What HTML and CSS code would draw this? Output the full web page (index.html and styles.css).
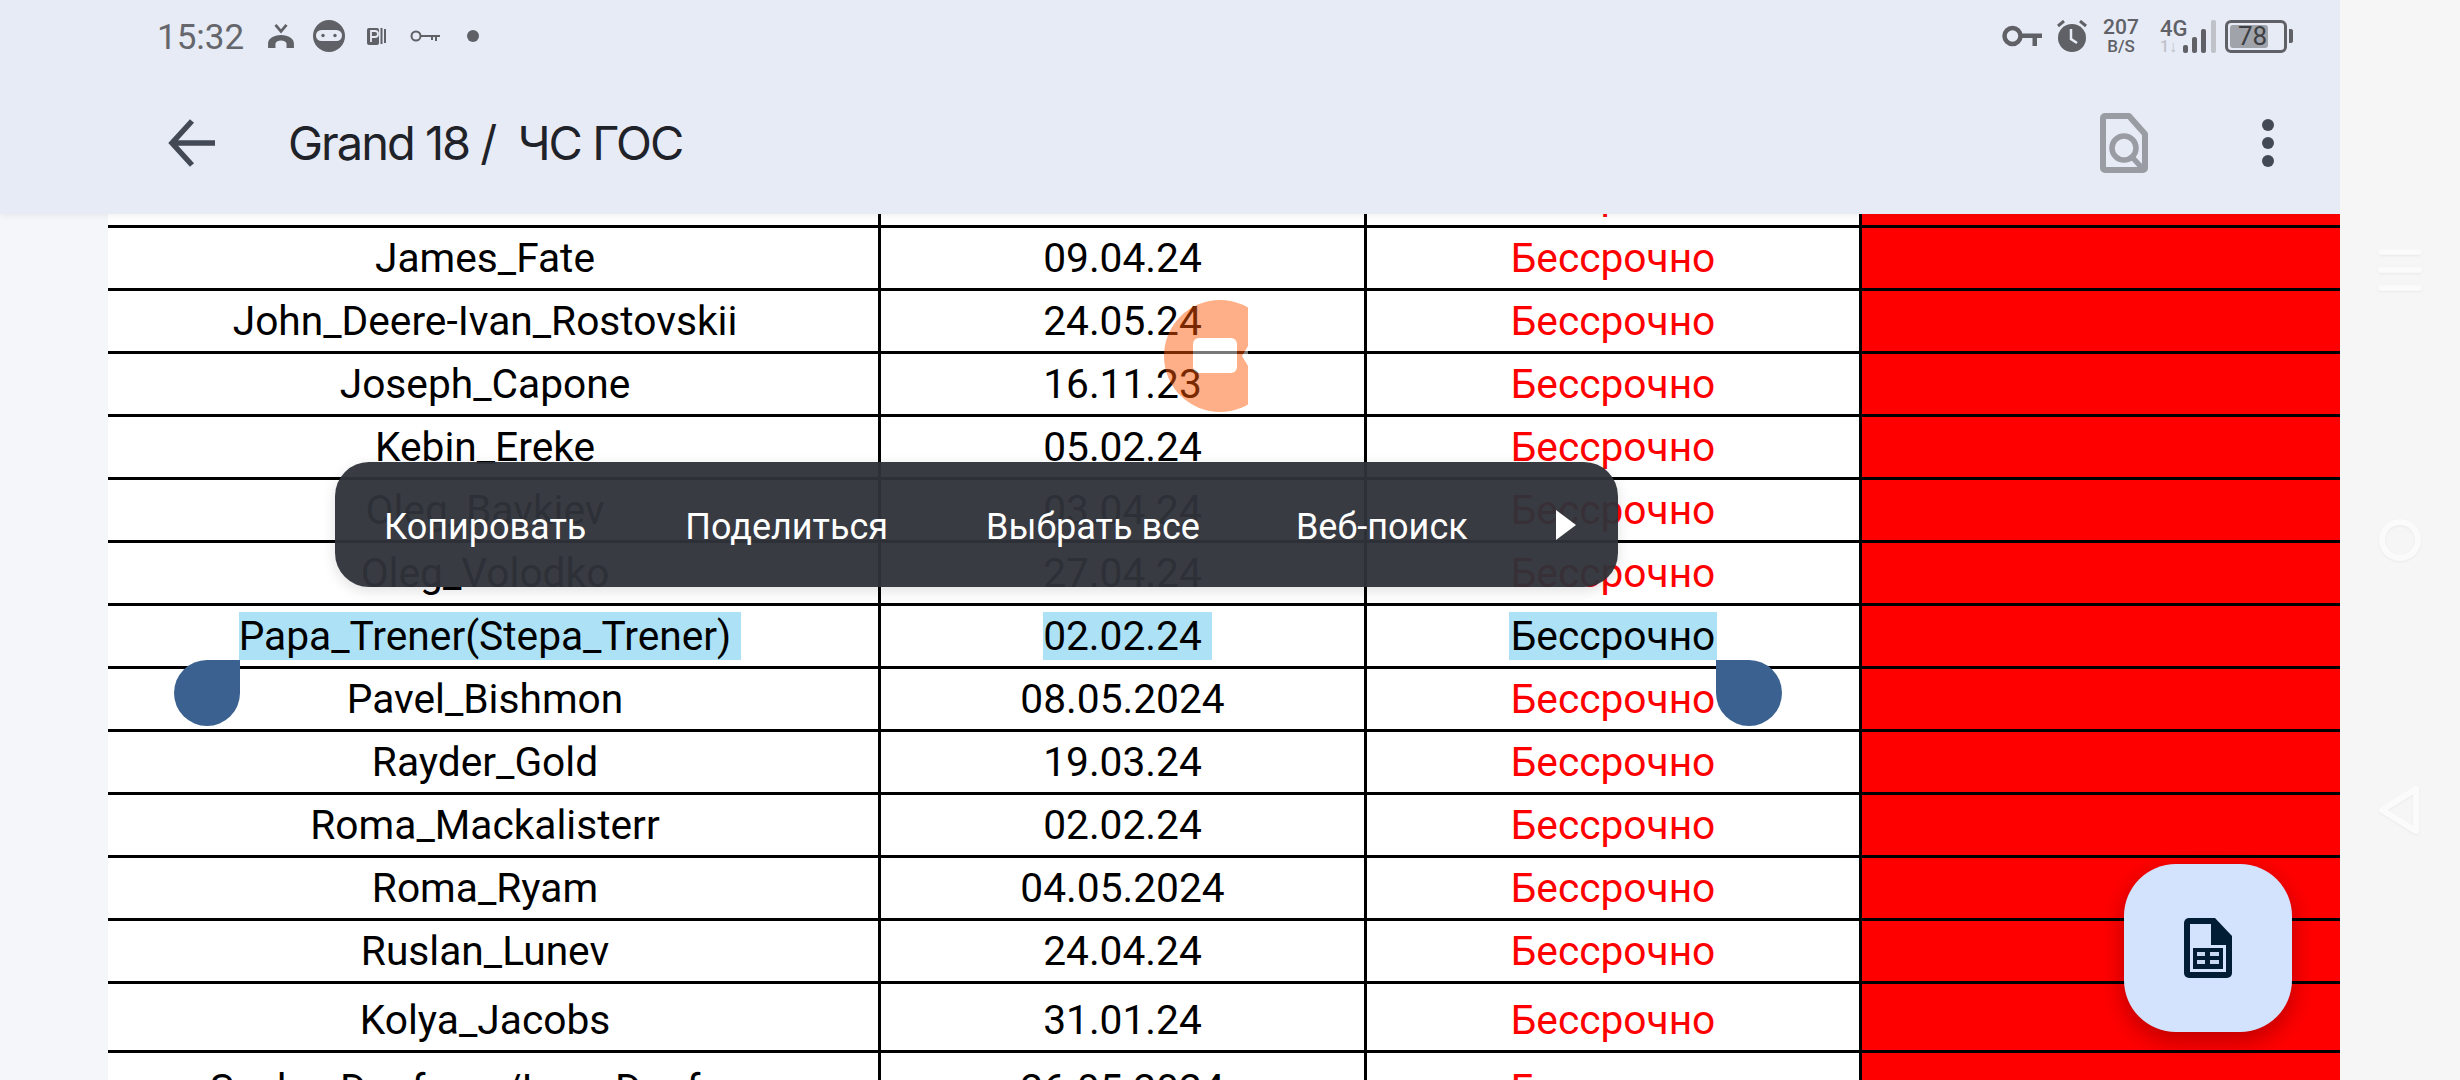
FILE: index.html
```html
<!DOCTYPE html>
<html lang="ru">
<head>
<meta charset="utf-8">
<title>Grand 18 / ЧС ГОС</title>
<link rel="stylesheet" href="styles.css">
</head>
<body>
<div class="screen">
  <div class="app">
    <header class="appbar">
      <div class="status">
        <div class="status-left">
          <span class="time">15:32</span>
          <svg class="i-call" viewBox="0 0 30 26"><path d="M9 1l6 7 6-7" fill="none" stroke="#5f6166" stroke-width="3"/><path d="M1 26v-5c0-5 6-9 14-9s14 4 14 9v5h-8v-5c-1-2-3-3-6-3s-5 1-6 3v5z" fill="#5f6166"/></svg>
          <svg class="i-ninja" viewBox="0 0 32 32"><circle cx="16" cy="16" r="16" fill="#5f6166"/><rect x="3" y="10" width="26" height="11" rx="5.5" fill="#e7ebf5"/><circle cx="10" cy="15.500" r="1.700" fill="#5f6166"/><circle cx="22" cy="15.500" r="1.700" fill="#5f6166"/></svg>
          <svg class="i-p" viewBox="0 0 20 20"><rect x="0" y="2" width="12" height="17" rx="2" fill="#5f6166"/><path d="M4 16V5h4a2.500 2.500 0 0 1 0 6H4" fill="none" stroke="#e7ebf5" stroke-width="1.800"/><path d="M14.500 2v16M18 3v14" stroke="#5f6166" stroke-width="2"/></svg>
          <svg class="i-key-small" viewBox="0 0 30 14"><circle cx="6" cy="7" r="4.500" fill="none" stroke="#5f6166" stroke-width="2"/><path d="M10 6h20v2h-3v4h-2V8h-2v3h-2V8H10z" fill="#5f6166"/></svg>
          <span class="dot"></span>
        </div>
        <div class="status-right">
          <svg class="i-key" viewBox="0 0 40 22"><circle cx="10.500" cy="11" r="8" fill="none" stroke="#5f6166" stroke-width="4.500"/><path d="M18 8.500h22v4.500h-5v8h-4.500v-8H18z" fill="#5f6166"/></svg>
          <svg class="i-clock" viewBox="0 0 32 33"><circle cx="16" cy="18" r="14" fill="#5f6166"/><path d="M15 9v10l6 4" fill="none" stroke="#e7ebf5" stroke-width="2.500"/><path d="M2 6l6-5M30 6l-6-5" stroke="#5f6166" stroke-width="3"/></svg>
          <div class="speed"><span class="speed-num">207</span><span class="speed-unit">B/S</span></div>
          <div class="net"><span class="net-label">4G</span><span class="net-arrows">1↓</span></div>
          <svg class="i-signal" viewBox="0 0 33 33"><rect x="0" y="25" width="5" height="8" rx="2" fill="#5f6166"/><rect x="9" y="17" width="5" height="16" rx="2" fill="#5f6166"/><rect x="18" y="9" width="5" height="24" rx="2" fill="#5f6166"/><rect x="28" y="0" width="5" height="33" rx="2" fill="#bfc2c9"/></svg>
          <div class="battery"><div class="battery-fill"></div><span class="battery-num">78</span></div>
          <span class="battery-nub"></span>
        </div>
      </div>
      <div class="toolbar">
        <svg class="i-back" viewBox="0 0 48 48"><path d="M47 24H4M24 2L4 24l20 22" fill="none" stroke="#444a55" stroke-width="5.500"/></svg>
        <h1 class="title">Grand 18 /&nbsp; ЧС ГОС</h1>
        <svg class="i-docsearch" viewBox="0 0 48 60"><path d="M5 3h24l16 18v34a2 2 0 0 1-2 2H5a2 2 0 0 1-2-2V5a2 2 0 0 1 2-2z" fill="none" stroke="#999ca3" stroke-width="6" stroke-linejoin="round"/><circle cx="24" cy="35" r="12" fill="none" stroke="#999ca3" stroke-width="5.500"/><path d="M32 44l11 12" stroke="#999ca3" stroke-width="5.500"/></svg>
        <div class="more"><span></span><span></span><span></span></div>
      </div>
    </header>
    <main class="sheet">
      <div class="rows">
        <div class="row"><div class="cell"></div><div class="cell"></div><div class="cell red">Бессрочно</div><div class="cell fill"></div></div>
        <div class="row"><div class="cell name">James_Fate</div><div class="cell">09.04.24</div><div class="cell red">Бессрочно</div><div class="cell fill"></div></div>
        <div class="row"><div class="cell name">John_Deere-Ivan_Rostovskii</div><div class="cell">24.05.24</div><div class="cell red">Бессрочно</div><div class="cell fill"></div></div>
        <div class="row"><div class="cell name">Joseph_Capone</div><div class="cell">16.11.23</div><div class="cell red">Бессрочно</div><div class="cell fill"></div></div>
        <div class="row"><div class="cell name">Kebin_Ereke</div><div class="cell">05.02.24</div><div class="cell red">Бессрочно</div><div class="cell fill"></div></div>
        <div class="row"><div class="cell name">Oleg_Bavkiev</div><div class="cell">03.04.24</div><div class="cell red">Бессрочно</div><div class="cell fill"></div></div>
        <div class="row"><div class="cell name">Oleg_Volodko</div><div class="cell">27.04.24</div><div class="cell red">Бессрочно</div><div class="cell fill"></div></div>
        <div class="row"><div class="cell name"><span class="sel sel-trail">Papa_Trener(Stepa_Trener)&nbsp;</span></div><div class="cell"><span class="sel sel-trail">02.02.24&nbsp;</span></div><div class="cell"><span class="sel">Бессрочно</span></div><div class="cell fill"></div></div>
        <div class="row"><div class="cell name">Pavel_Bishmon</div><div class="cell">08.05.2024</div><div class="cell red">Бессрочно</div><div class="cell fill"></div></div>
        <div class="row"><div class="cell name">Rayder_Gold</div><div class="cell">19.03.24</div><div class="cell red">Бессрочно</div><div class="cell fill"></div></div>
        <div class="row"><div class="cell name">Roma_Mackalisterr</div><div class="cell">02.02.24</div><div class="cell red">Бессрочно</div><div class="cell fill"></div></div>
        <div class="row"><div class="cell name">Roma_Ryam</div><div class="cell">04.05.2024</div><div class="cell red">Бессрочно</div><div class="cell fill"></div></div>
        <div class="row"><div class="cell name">Ruslan_Lunev</div><div class="cell">24.04.24</div><div class="cell red">Бессрочно</div><div class="cell fill"></div></div>
        <div class="row row-tall"><div class="cell name">Kolya_Jacobs</div><div class="cell">31.01.24</div><div class="cell red">Бессрочно</div><div class="cell fill"></div></div>
        <div class="row row-tall"><div class="cell name">Sasha_Danforov/Ivan_Danforp</div><div class="cell">26.05.2024</div><div class="cell red">Бессрочно</div><div class="cell fill"></div></div>
      </div>
      <div class="handle handle-start"></div>
      <div class="handle handle-end"></div>
    </main>
    <button class="fab" type="button" aria-label="Sheet">
      <svg viewBox="0 0 48 60"><path d="M5 0h26l17 18v37a5 5 0 0 1-5 5H5a5 5 0 0 1-5-5V5a5 5 0 0 1 5-5z" fill="#001d35"/><path d="M6 6h21v21h15v27H6z" fill="#d3e3fd"/><rect x="9" y="30" width="30" height="21" fill="#001d35"/><path d="M13 34h8v4h-8zM26 34h9v4h-9zM13 42h8v4h-8zM26 42h9v4h-9z" fill="#c8d8f0"/></svg>
    </button>
    <div class="bubble"><span class="bubble-disc"></span><span class="bubble-cam"></span><span class="bubble-lens"></span></div>
    <div class="popup">
      <span class="popup-item pi-1">Копировать</span>
      <span class="popup-item pi-2">Поделиться</span>
      <span class="popup-item pi-3">Выбрать все</span>
      <span class="popup-item pi-4">Веб-поиск</span>
      <svg class="popup-arrow" viewBox="0 0 22 32"><path d="M1 1l20 15L1 31z" fill="#fff"/></svg>
    </div>
  </div>
  <nav class="navbar">
    <svg class="i-nav i-menu" viewBox="0 0 44 44"><path d="M3 4h38M3 22h38M3 40h38" stroke="#fbfbfb" stroke-width="5.500" stroke-linecap="round"/></svg>
    <svg class="i-nav i-home" viewBox="0 0 44 44"><circle cx="22" cy="22" r="18" fill="none" stroke="#fbfbfb" stroke-width="6"/></svg>
    <svg class="i-nav i-tri" viewBox="0 0 44 50"><path d="M38 4v42L4 25z" fill="none" stroke="#fbfbfb" stroke-width="6" stroke-linejoin="round"/></svg>
  </nav>
</div>
</body>
</html>
```
FILE: styles.css
```css
* { box-sizing: border-box; }
html, body { margin: 0; padding: 0; }
body {
  width: 2460px;
  height: 1080px;
  overflow: hidden;
  background: #f6f6f6;
  font-family: Roboto, "Noto Sans", sans-serif;
}
.screen { display: flex; width: 2460px; height: 1080px; }
.app {
  position: relative;
  width: 2340px;
  height: 1080px;
  overflow: hidden;
  display: flex;
  flex-direction: column;
  background: #f5f6fa;
}
.appbar {
  position: relative;
  z-index: 2;
  flex: none;
  height: 214px;
  background: #e7ebf5;
  box-shadow: 0 2px 6px rgba(0,0,0,.06);
}
.status {
  height: 72px;
  padding: 0 47px 0 157px;
  display: flex;
  align-items: center;
  justify-content: space-between;
  color: #5f6166;
}
.status-left, .status-right { display: flex; align-items: center; }
.time { font-size: 35px; line-height: 72px; padding-top: 4px; color: #65676c; width: 87px; }
.status-left svg, .status-right svg { display: block; flex: none; }
.i-call { width: 28px; height: 24px; margin-left: 23px; }
.i-ninja { width: 32px; height: 32px; margin-left: 18px; }
.i-p { width: 20px; height: 20px; margin-left: 22px; }
.i-key-small { width: 30px; height: 14px; margin-left: 23px; }
.dot { width: 12px; height: 12px; border-radius: 50%; background: #5f6166; margin-left: 27px; }
.i-key { width: 40px; height: 22px; }
.i-clock { width: 32px; height: 33px; margin-left: 14px; }
.speed { display: flex; flex-direction: column; align-items: center; margin-left: 16px; width: 34px; font-weight: 500; }
.speed-num { font-size: 21px; line-height: 20px; }
.speed-unit { font-size: 17px; line-height: 18px; }
.net { display: flex; flex-direction: column; margin-left: 22px; width: 26px; font-weight: 500; }
.net-label { font-size: 22px; line-height: 22px; }
.net-arrows { font-size: 16px; line-height: 14px; color: #bfc2c9; }
.i-signal { width: 33px; height: 33px; margin-left: -3px; }
.battery {
  position: relative;
  width: 62px;
  height: 33px;
  margin-left: 9px;
  border: 3px solid #5f6166;
  border-radius: 6px;
}
.battery-fill { position: absolute; left: 2px; top: 2px; width: 38px; height: 23px; background: #a0a3aa; border-radius: 3px; }
.battery-num { position: absolute; left: 10px; top: 0; font-size: 26px; line-height: 27px; color: #3d3f44; }
.battery-nub { width: 4px; height: 14px; margin-left: 2px; background: #5f6166; border-radius: 0 2px 2px 0; }
.toolbar {
  height: 142px;
  display: flex;
  align-items: center;
  padding: 0 0 0 168px;
  position: relative;
}
.i-back { width: 48px; height: 48px; flex: none; }
.title {
  margin: 0 0 2px 72px;
  font-family: Inter, Roboto, sans-serif;
  font-weight: 400;
  font-size: 47px;
  letter-spacing: -2px;
  color: #1f2329;
  white-space: nowrap;
}
.i-docsearch { width: 48px; height: 60px; margin-left: auto; flex: none; }
.more { width: 12px; margin: 0 66px 0 114px; display: flex; flex-direction: column; gap: 6px; }
.more span { display: block; width: 12px; height: 12px; border-radius: 50%; background: #444a55; }
.sheet {
  position: relative;
  flex: 1;
  margin-left: 108px;
  overflow: hidden;
  background: #fff;
}
.rows { margin-top: -49px; }
.row {
  display: grid;
  grid-template-columns: 773px 486px 495px 478px;
  height: 63px;
  border-bottom: 3px solid #000;
}
.row-tall { height: 69px; }
.row-tall .cell { padding-top: 6px; }
.cell {
  display: flex;
  align-items: center;
  justify-content: center;
  border-right: 3px solid #000;
  font-size: 40.7px;
  color: #000;
  white-space: nowrap;
}
.name { padding-right: 16px; }
.red { color: #f00; }
.fill { background: #f00; border-right: 0; }
.sel {
  display: inline-block;
  line-height: 48px;
  padding: 0 2px;
  background: #ade1f5;
}
.sel-trail { padding: 0; margin-right: -10px; }
.handle { position: absolute; width: 66px; height: 66px; background: #3a618f; top: 446px; }
.handle-start { left: 66px; border-radius: 50% 0 50% 50%; }
.handle-end { left: 1608px; border-radius: 0 50% 50% 50%; }
.fab {
  position: absolute;
  left: 2124px;
  top: 864px;
  z-index: 3;
  width: 168px;
  height: 168px;
  padding: 0;
  border: 0;
  border-radius: 52px;
  background: #d3e3fd;
  box-shadow: 0 8px 24px rgba(0,0,0,.28);
  display: flex;
  align-items: center;
  justify-content: center;
}
.fab svg { width: 48px; height: 60px; display: block; }
.bubble {
  position: absolute;
  left: 1164px;
  top: 300px;
  z-index: 3;
  width: 84px;
  height: 112px;
  overflow: hidden;
  opacity: .47;
}
.bubble-disc {
  position: absolute;
  left: 0;
  top: 0;
  width: 112px;
  height: 112px;
  border-radius: 50%;
  background: #ff5702;
}
.bubble-cam {
  position: absolute;
  left: 29px;
  top: 38px;
  width: 44px;
  height: 35px;
  background: #fff;
  border-radius: 6px;
}
.bubble-lens {
  position: absolute;
  left: 78px;
  top: 46px;
  width: 6px;
  height: 20px;
  background: #fff;
  clip-path: polygon(0 50%, 100% 0, 100% 100%);
}
.popup {
  position: absolute;
  left: 335px;
  top: 462px;
  z-index: 4;
  width: 1283px;
  height: 125px;
  border-radius: 34px;
  background: rgba(47,50,57,.957);
  box-shadow: 0 4px 14px rgba(0,0,0,.12);
  display: flex;
  align-items: center;
  color: #fff;
  font-size: 36px;
  padding-top: 4px;
}
.popup-item { white-space: nowrap; }
.pi-1 { margin-left: 49px; }
.pi-2 { margin-left: 99px; }
.pi-3 { margin-left: 98px; }
.pi-4 { margin-left: 96px; }
.popup-arrow { width: 22px; height: 32px; margin-left: auto; margin-right: 41px; margin-top: -4px; flex: none; }
.navbar {
  position: relative;
  width: 120px;
  height: 1080px;
  background: #f6f6f6;
}
.i-nav { position: absolute; filter: drop-shadow(0 1px 1px rgba(0,0,0,.05)); }
.i-menu { left: 38px; top: 248px; width: 44px; height: 44px; }
.i-home { left: 38px; top: 518px; width: 44px; height: 44px; }
.i-tri { left: 38px; top: 785px; width: 44px; height: 50px; }
```
